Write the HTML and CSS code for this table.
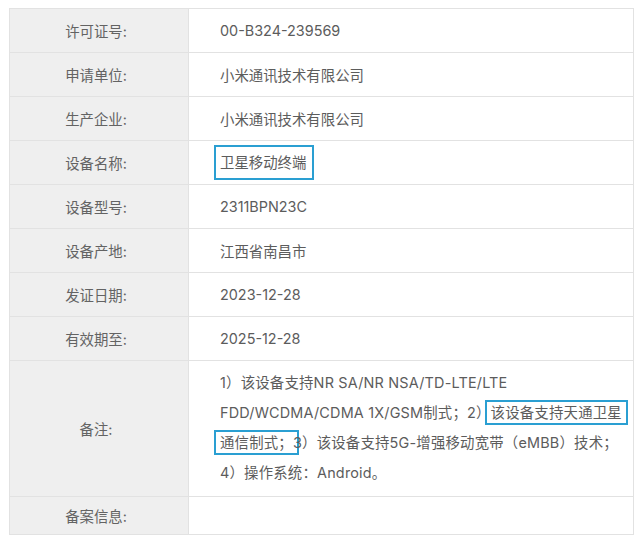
FILE: index.html
```html
<!DOCTYPE html>
<html lang="zh-CN">
<head>
<meta charset="utf-8">
<link rel="stylesheet" href="styles.css">
</head>
<body>
<table class="info">
  <tr><th>许可证号:</th><td>00-B324-239569</td></tr>
  <tr><th>申请单位:</th><td>小米通讯技术有限公司</td></tr>
  <tr><th>生产企业:</th><td>小米通讯技术有限公司</td></tr>
  <tr><th>设备名称:</th><td><span class="hl-block">卫星移动终端</span></td></tr>
  <tr><th>设备型号:</th><td>2311BPN23C</td></tr>
  <tr><th>设备产地:</th><td>江西省南昌市</td></tr>
  <tr><th>发证日期:</th><td>2023-12-28</td></tr>
  <tr><th>有效期至:</th><td>2025-12-28</td></tr>
  <tr class="remark"><th>备注:</th><td>1）该设备支持NR SA/NR NSA/TD-LTE/LTE<br>FDD/WCDMA/CDMA 1X/GSM制式；2）<span class="hl">该设备支持天通卫星</span><br><span class="hl">通信制式；</span>3）该设备支持5G-增强移动宽带（eMBB）技术；<br>4）操作系统：Android。</td></tr>
  <tr class="last"><th>备案信息:</th><td></td></tr>
</table>
</body>
</html>
```
FILE: styles.css
```css
html, body {
  margin: 0;
  padding: 0;
  background: #ffffff;
}
body {
  padding: 8px 0 0 9px;
  font-family: "Inter", "Noto Sans CJK SC", sans-serif;
  font-size: 14.4px;
  color: #5c5c5c;
}
.info {
  border-collapse: collapse;
  width: 625px;
  table-layout: fixed;
}
.info th, .info td {
  border: 1px solid #e2e2e2;
  height: 43px;
  padding: 0;
  vertical-align: middle;
}
.info th {
  width: 179px;
  background: #efefef;
  font-weight: normal;
  color: #636363;
  text-align: center;
  padding-right: 6px;
  box-sizing: border-box;
}
.info td {
  padding-left: 31px;
  text-align: left;
  background: #ffffff;
}
.remark td {
  height: auto;
  line-height: 30px;
  padding-top: 7px;
  padding-bottom: 8px;
  letter-spacing: 0.2px;
  white-space: nowrap;
}
.last th, .last td {
  height: 37px;
}
.hl-block {
  display: inline-block;
  border: 2px solid #2a9fd2;
  padding: 3px 6px 3px 4px;
  line-height: 25px;
  margin-left: -6px;
}
.hl {
  border: 2px solid #2a9fd2;
  padding: 2px 4px;
  margin: 0 -6px;
}
```
